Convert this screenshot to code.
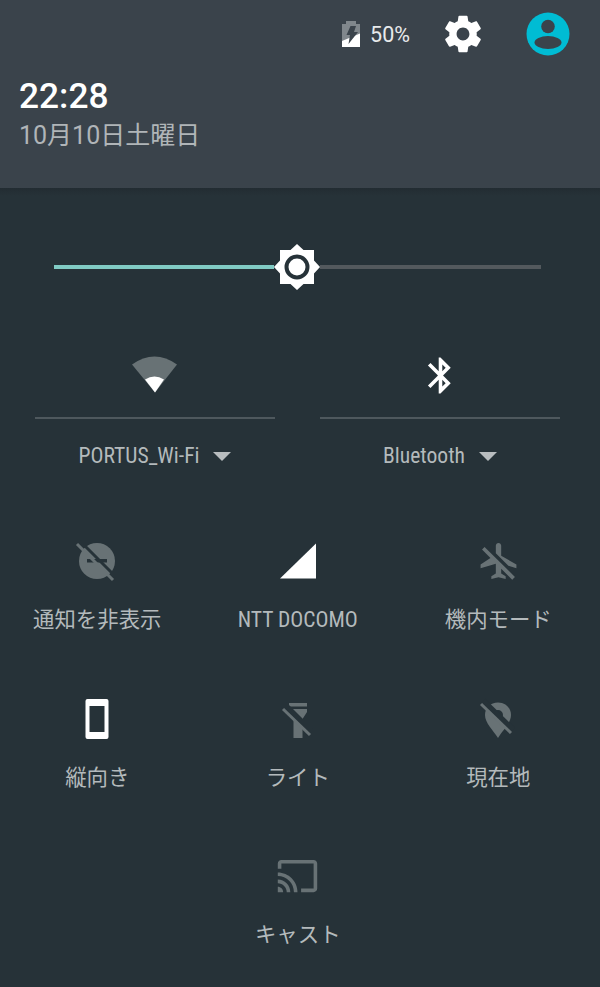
<script>
  const icon = "icon";
</script>

<div class="screen">
  <header class="head">
    <div class="status">
      <svg class="battery" viewBox="0 0 18 26" width="18" height="26">
        <path class="dim-bat" d="M4 0h10v3h4v23H0V3h4z" />
        <path fill="#fff" d="M0 26V20L18 12.500V26z" />
        <path fill="#3a434b" d="M8.500 5h5.500l-2 6h4L6.500 23l1.500-9H4.500z" />
      </svg>
      <span class="pct">50%</span>
      <svg class="gear" viewBox="0 0 24 24" width="44" height="44">
        <path fill="#fff" d="M19.430 12.980c.04-.32.07-.64.07-.98s-.03-.66-.07-.98l2.110-1.650c.19-.15.24-.42.12-.64l-2-3.460c-.12-.22-.39-.3-.61-.22l-2.490 1c-.52-.4-1.080-.73-1.690-.98l-.38-2.650C14.460 2.180 14.250 2 14 2h-4c-.25 0-.46.18-.49.42l-.38 2.650c-.61.25-1.170.59-1.690.98l-2.490-1c-.23-.09-.49 0-.61.22l-2 3.460c-.13.22-.07.49.12.64l2.110 1.650c-.04.32-.07.65-.07.98s.03.66.07.98l-2.110 1.650c-.19.15-.24.42-.12.64l2 3.460c.12.22.39.3.61.22l2.490-1c.52.4 1.080.73 1.690.98l.38 2.650c.03.24.24.42.49.42h4c.25 0 .46-.18.49-.42l.38-2.650c.61-.25 1.170-.59 1.690-.98l2.490 1c.23.09.49 0 .61-.22l2-3.460c.12-.22.07-.49-.12-.64l-2.110-1.650zM12 15.500c-1.930 0-3.500-1.570-3.500-3.500s1.570-3.500 3.500-3.500 3.500 1.570 3.500 3.500-1.570 3.500-3.500 3.500z" />
      </svg>
      <svg class="avatar" viewBox="0 0 44 44" width="44" height="44">
        <circle cx="22" cy="22" r="21.500" fill="#00bcd4" />
        <circle cx="22" cy="14.500" r="6.800" fill="#3a434b" />
        <ellipse cx="22" cy="30.500" rx="13.500" ry="6.500" fill="#3a434b" />
      </svg>
    </div>
    <div class="time">22:28</div>
    <div class="date">10月10日土曜日</div>
  </header>

  <main class="panel">
    <div class="slider">
      <div class="track on"></div>
      <svg class="thumb" viewBox="0 0 46 46" width="46" height="46">
        <path fill="#fff" d="M23 0l6.500 6H40v10.500l6 6.500-6 6.500V40H29.500L23 46l-6.500-6H6V29.500L0 23l6-6.500V6h10.500z" />
        <circle cx="23" cy="23" r="10.500" fill="none" stroke="#263238" stroke-width="4" />
      </svg>
      <div class="track off"></div>
    </div>

    <div class="dual">
      <div class="dual-tile">
        <svg class="dual-icon" viewBox="0 0 48 40" width="48" height="40">
          <path class="dim" d="M1 9Q23.500-7 46 9L24 37z" />
          <path fill="#fff" d="M14 24Q23.500 18 33 24L24 37z" />
        </svg>
        <div class="rule"></div>
        <div class="dual-label">
          <span class="narrow">PORTUS_Wi-Fi</span>
          <i class="caret"></i>
        </div>
      </div>
      <div class="dual-tile">
        <svg class="dual-icon" viewBox="0 0 24 24" width="43" height="43">
          <path fill="#fff" d="M17.710 7.710L12 2h-1v7.590L6.410 5 5 6.410 10.590 12 5 17.590 6.410 19 11 14.410V22h1l5.710-5.710-4.300-4.290 4.300-4.290zM13 5.830l1.880 1.880L13 9.590V5.830zm1.880 10.460L13 18.170v-3.760l1.880 1.880z" />
        </svg>
        <div class="rule"></div>
        <div class="dual-label">
          <span class="narrow">Bluetooth</span>
          <i class="caret"></i>
        </div>
      </div>
    </div>

    <div class="tiles">
      <div class="tile">
        <svg viewBox="0 0 44 44" width="44" height="44">
          <circle class="dim" cx="22" cy="22" r="18" />
          <rect x="12" y="20" width="20" height="3.500" fill="#263238" />
          <path d="M5 2L41 38" stroke="#263238" stroke-width="3" />
          <path d="M2 5L38 41" stroke="#687275" stroke-width="3" />
        </svg>
        <span>通知を非表示</span>
      </div>
      <div class="tile">
        <svg viewBox="0 0 44 44" width="44" height="44">
          <path fill="#fff" d="M4 39.500L40 4.500v35z" />
        </svg>
        <span class="narrow">NTT DOCOMO</span>
      </div>
      <div class="tile">
        <svg viewBox="0 0 24 24" width="43" height="43">
          <path class="dim" d="M10.500 7.670V3.500c0-.83.67-1.500 1.500-1.500s1.500.67 1.500 1.500V9l8.500 5v2l-4.490-1.320-7.010-7.010zm9.280 14.610l1.410-1.410L4.220 4.220 2.810 5.640l4.690 4.690L2 14v2l8.500-2.500V19L8 20.500V22l4-1 4 1v-1.500L13.500 19v-2.670l6.280 6.280z" />
        </svg>
        <span>機内モード</span>
      </div>
      <div class="tile">
        <svg viewBox="0 0 44 44" width="44" height="44">
          <path fill-rule="evenodd" fill="#fff" d="M12.500 2h19a2 2 0 0 1 2 2v36a2 2 0 0 1-2 2h-19a2 2 0 0 1-2-2V4a2 2 0 0 1 2-2zM14.500 9v26h15V9z" />
        </svg>
        <span>縦向き</span>
      </div>
      <div class="tile">
        <svg viewBox="0 0 44 44" width="44" height="44">
          <path class="dim" d="M13 6h18v3.500H13zM13 12h18v3l-4.500 7v19h-9V22L13 15z" />
          <path d="M8 8L34 34" stroke="#263238" stroke-width="7" />
          <path d="M7 12L34 38" stroke="#687275" stroke-width="3" />
        </svg>
        <span>ライト</span>
      </div>
      <div class="tile">
        <svg viewBox="0 0 44 44" width="44" height="44">
          <path class="dim" fill-rule="evenodd" d="M22 5.500c7.500 0 13 5.500 13 12.500 0 8-8 15-13 23C17 33 9 26 9 18 9 11 14.500 5.500 22 5.500zM22 13a5 5 0 1 0 0 10 5 5 0 0 0 0-10z" />
          <path d="M7 4L37 33" stroke="#263238" stroke-width="6" />
          <path d="M5 7L35 36" stroke="#687275" stroke-width="3" />
        </svg>
        <span>現在地</span>
      </div>
      <div class="tile last">
        <svg viewBox="0 0 24 24" width="43" height="43">
          <path class="dim" d="M21 3H3c-1.100 0-2 .9-2 2v3h2V5h18v14h-7v2h7c1.100 0 2-.9 2-2V5c0-1.100-.9-2-2-2zM1 18v3h3c0-1.660-1.340-3-3-3zm0-4v2c2.760 0 5 2.240 5 5h2c0-3.870-3.130-7-7-7zm0-4v2c4.970 0 9 4.030 9 9h2c0-6.080-4.930-11-11-11z" />
        </svg>
        <span>キャスト</span>
      </div>
    </div>
  </main>
</div>

<style>
  :global(body) {
    margin: 0;
    background: #263238;
  }

  .screen {
    width: 600px;
    height: 987px;
    overflow: hidden;
    display: flex;
    flex-direction: column;
    font-family: Roboto, "Noto Sans CJK JP", sans-serif;
    color: #b4babc;
  }

  .dim {
    fill: #687275;
  }
  .dim-bat {
    fill: #80878c;
  }

  .head {
    height: 188px;
    box-sizing: border-box;
    padding: 12px 0 0 19px;
    background: #3a434b;
    flex: none;
  }
  .status {
    display: flex;
    align-items: center;
    justify-content: flex-end;
    height: 44px;
    padding-right: 30px;
  }
  .battery {
    margin-right: 10px;
  }
  .pct {
    font-size: 21.500px;
    color: #e8eaeb;
    margin-right: 31px;
  }
  .gear {
    margin-right: 41px;
  }
  .time {
    margin-top: 18px;
    font-size: 35.300px;
    line-height: 44px;
    font-weight: 500;
    color: #fff;
  }
  .date {
    margin-top: 2px;
    font-size: 25px;
    line-height: 32px;
    color: #b0b5b8;
  }

  .panel {
    flex: 1;
    position: relative;
    background: linear-gradient(#222c32, #263238 8px);
  }

  .slider {
    display: flex;
    align-items: center;
    margin: 56px 59px 0 54px;
    height: 46px;
  }
  .track {
    height: 4px;
  }
  .track.on {
    width: 220px;
    background: #80cbc4;
  }
  .track.off {
    flex: 1;
    background: #53595d;
  }
  .thumb {
    flex: none;
  }

  .dual {
    display: flex;
    gap: 45px;
    padding: 0 40px 0 35px;
    margin-top: 64px;
  }
  .dual-tile {
    width: 240px;
    display: flex;
    flex-direction: column;
    align-items: center;
  }
  .dual-icon {
    height: 43px;
  }
  .rule {
    align-self: stretch;
    height: 2px;
    margin-top: 20px;
    background: #4e585d;
  }
  .dual-label {
    margin-top: 22px;
    display: flex;
    align-items: center;
    gap: 14px;
    line-height: 30px;
  }
  .caret {
    width: 0;
    height: 0;
    border-left: 9px solid transparent;
    border-right: 9px solid transparent;
    border-top: 9px solid #b8bdbf;
  }
  .narrow {
    font-stretch: 75%;
    font-size: 21.600px;
  }

  .tiles {
    display: grid;
    grid-template-columns: repeat(3, 200.500px);
    grid-auto-rows: 157.500px;
    margin: 68px 0 0 -3px;
  }
  .tile {
    display: flex;
    flex-direction: column;
    align-items: center;
    font-size: 21.400px;
    line-height: 30px;
  }
  .tile svg {
    display: block;
    height: 44px;
    margin-bottom: 22px;
  }
  .tile.last {
    grid-column: 2;
  }
</style>
